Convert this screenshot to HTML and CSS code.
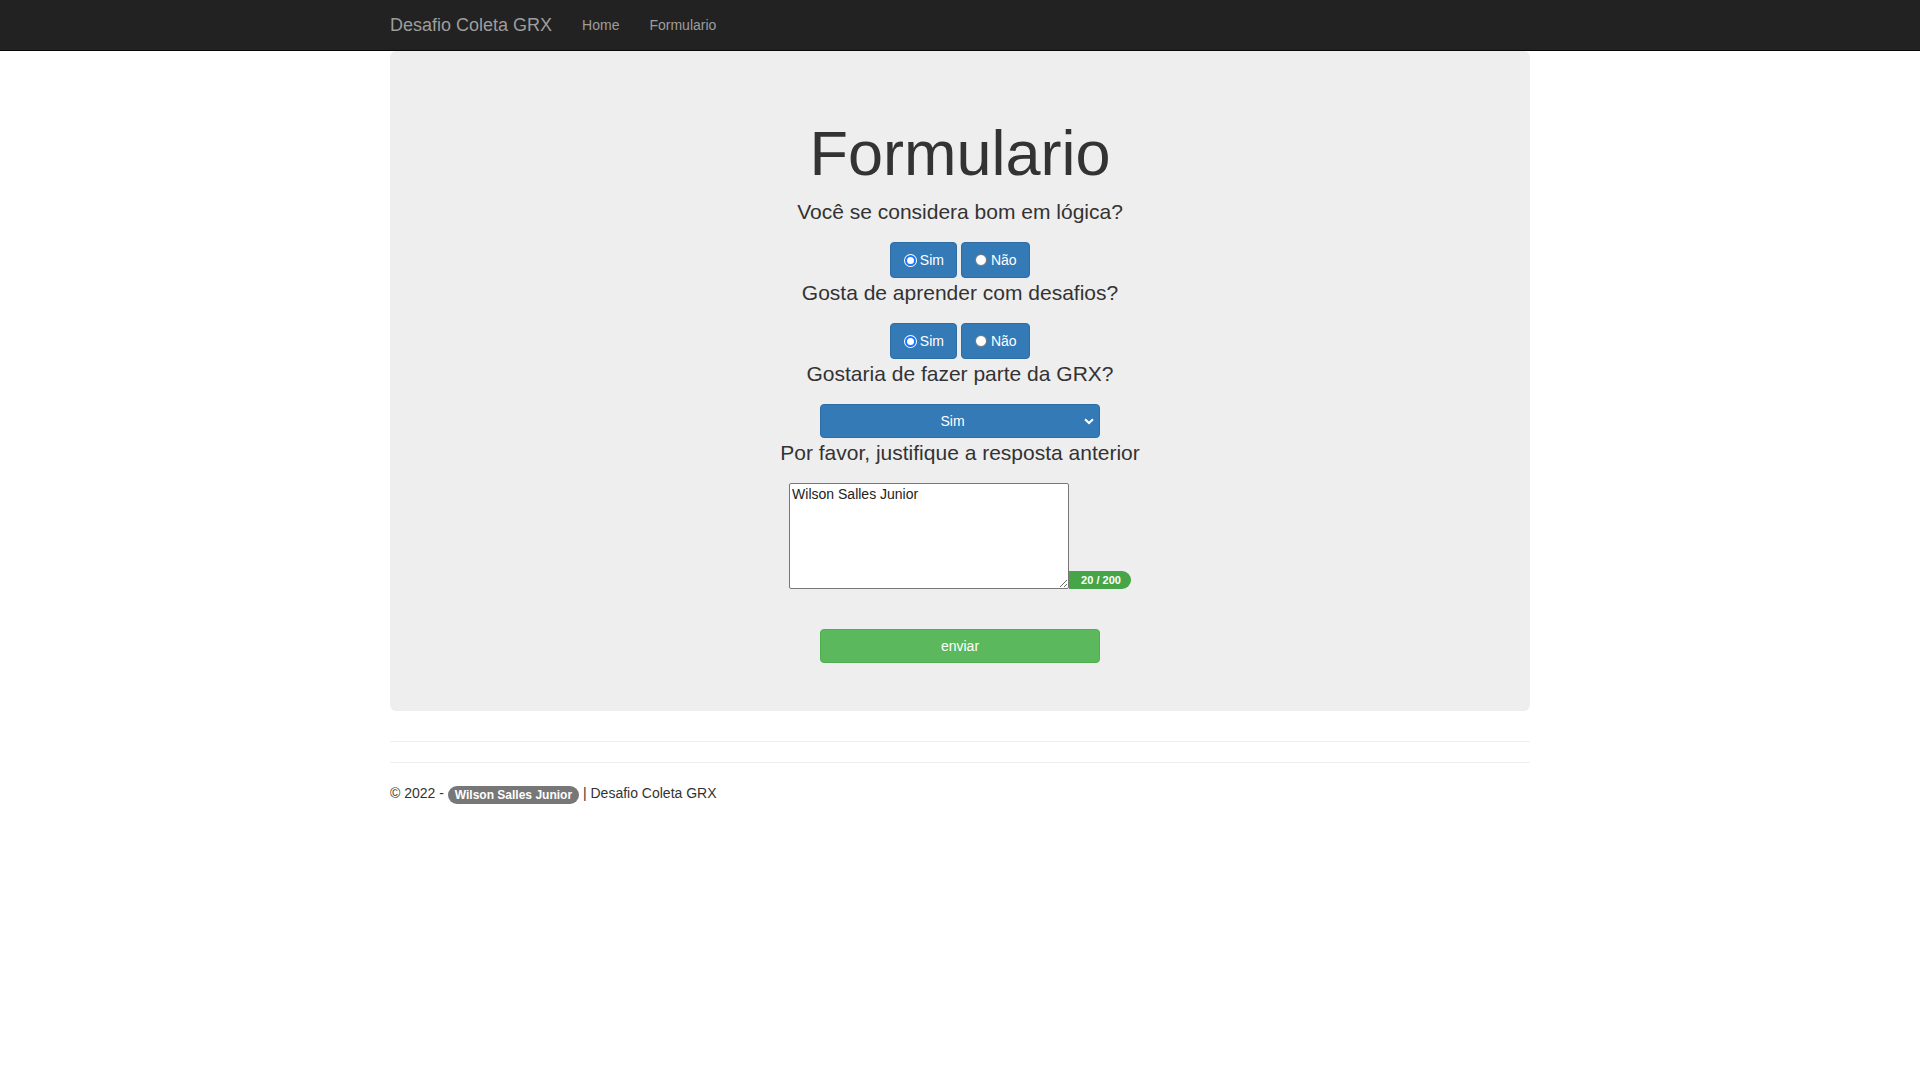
FILE: index.html
```html
<!DOCTYPE html>
<html lang="pt-BR">
<head>
<meta charset="utf-8">
<title>Formulario - Desafio Coleta GRX</title>
<link rel="stylesheet" href="styles.css">
</head>
<body>
<nav class="navbar">
  <div class="container nav-inner">
    <a class="brand" href="#">Desafio Coleta GRX</a>
    <ul class="nav">
      <li><a href="#">Home</a></li>
      <li><a href="#">Formulario</a></li>
    </ul>
  </div>
</nav>
<div class="container">
  <div class="jumbotron">
    <h1>Formulario</h1>
    <p class="q">Você se considera bom em lógica?</p>
    <div class="btn-row">
      <label class="btn"><span class="radio focus"></span>Sim</label>
      <label class="btn"><span class="radio"></span>Não</label>
    </div>
    <p class="q">Gosta de aprender com desafios?</p>
    <div class="btn-row">
      <label class="btn"><span class="radio focus"></span>Sim</label>
      <label class="btn"><span class="radio"></span>Não</label>
    </div>
    <p class="q">Gostaria de fazer parte da GRX?</p>
    <div class="select">
      <span class="select-text">Sim</span>
      <svg class="chev" width="10" height="7" viewBox="0 0 10 7"><path d="M1 1.2 L5 5 L9 1.2" fill="none" stroke="#fff" stroke-width="2"/></svg>
    </div>
    <p class="q">Por favor, justifique a resposta anterior</p>
    <div class="text-row">
      <textarea class="answer">Wilson Salles Junior</textarea><span class="count">20 / 200</span>
    </div>
    <button class="send">enviar</button>
  </div>
  <hr class="rule">
  <footer class="footer">
    <hr class="rule">
    <p>© 2022 - <span class="badge">Wilson Salles Junior</span> | Desafio Coleta GRX</p>
  </footer>
</div>
</body>
</html>
```

FILE: styles.css
```css
* { box-sizing: border-box; }
html, body { margin: 0; padding: 0; }
body {
  font-family: "Liberation Sans", Arial, sans-serif;
  font-size: 14px;
  line-height: 20px;
  color: #333;
  background: #fff;
}
.container {
  width: 1170px;
  margin: 0 auto;
  padding: 0 15px;
}
.navbar {
  background: #222;
  border-bottom: 1px solid #080808;
  height: 51px;
}
.nav-inner {
  display: flex;
  align-items: center;
  height: 50px;
}
.brand {
  color: #9d9d9d;
  font-size: 18px;
  line-height: 20px;
  padding: 15px 15px 15px 0;
  text-decoration: none;
}
.nav {
  display: flex;
  list-style: none;
  margin: 0;
  padding: 0;
}
.nav a {
  display: block;
  padding: 15px;
  color: #9d9d9d;
  text-decoration: none;
  font-size: 14px;
  line-height: 20px;
}
.jumbotron {
  background: #eee;
  border-radius: 6px;
  padding: 48px 60px;
  margin-bottom: 30px;
  text-align: center;
}
.jumbotron h1 {
  font-size: 63px;
  line-height: 1.1;
  font-weight: 500;
  margin: 20px 0 9px;
}
.q {
  font-size: 21px;
  line-height: 30px;
  font-weight: 200;
  margin: 0 0 15px;
}
.btn-row {
  display: flex;
  justify-content: center;
  gap: 4px;
  height: 36px;
}
.btn {
  display: inline-flex;
  align-items: center;
  height: 36px;
  padding: 0 12px;
  background: #337ab7;
  border: 1px solid #2e6da4;
  border-radius: 4px;
  color: #fff;
  font-size: 14px;
}
.radio {
  width: 12px;
  height: 12px;
  border-radius: 50%;
  margin: 0 4px 0 1px;
  background: #fff;
  border: 1px solid #767676;
}
.radio.focus {
  width: 11px;
  height: 11px;
  margin: 0 4px 0 1.5px;
  border: 2.5px solid #1a74ff;
  box-shadow: 0 0 0 1px #fff;
}
.select {
  display: flex;
  align-items: center;
  width: 280px;
  height: 34px;
  margin: 0 auto;
  background: #337ab7;
  border: 1px solid #2e6da4;
  border-radius: 4px;
  color: #fff;
  font-size: 14px;
}
.select-text { flex: 1; text-align: center; }
.chev { margin-right: 5px; }
.text-row {
  display: flex;
  justify-content: center;
  align-items: flex-end;
}
.answer {
  width: 280px;
  height: 106px;
  margin: 0;
  padding: 2px;
  border: 1px solid #767676;
  border-radius: 2px;
  font-family: "Liberation Sans", Arial, sans-serif;
  font-size: 14px;
  line-height: 16px;
  color: #222;
  background: #fff;
}
.count {
  height: 18px;
  line-height: 18px;
  padding: 0 10px 0 12px;
  background: #46a546;
  color: #fff;
  font-weight: bold;
  font-size: 11px;
  border-radius: 0 9px 9px 0;
}
.send {
  display: block;
  width: 280px;
  height: 34px;
  margin: 40px auto 0;
  background: #5cb85c;
  border: 1px solid #4cae4c;
  border-radius: 4px;
  color: #fff;
  font-family: "Liberation Sans", Arial, sans-serif;
  font-size: 14px;
}
.rule {
  border: 0;
  border-top: 1px solid #eee;
  margin: 0 0 20px;
  height: 0;
}
.footer p { margin: 0 0 10px; }
.badge {
  display: inline-block;
  padding: 3px 7px;
  font-size: 12px;
  font-weight: bold;
  line-height: 12px;
  color: #fff;
  background: #777;
  border-radius: 10px;
  vertical-align: middle;
}
```
